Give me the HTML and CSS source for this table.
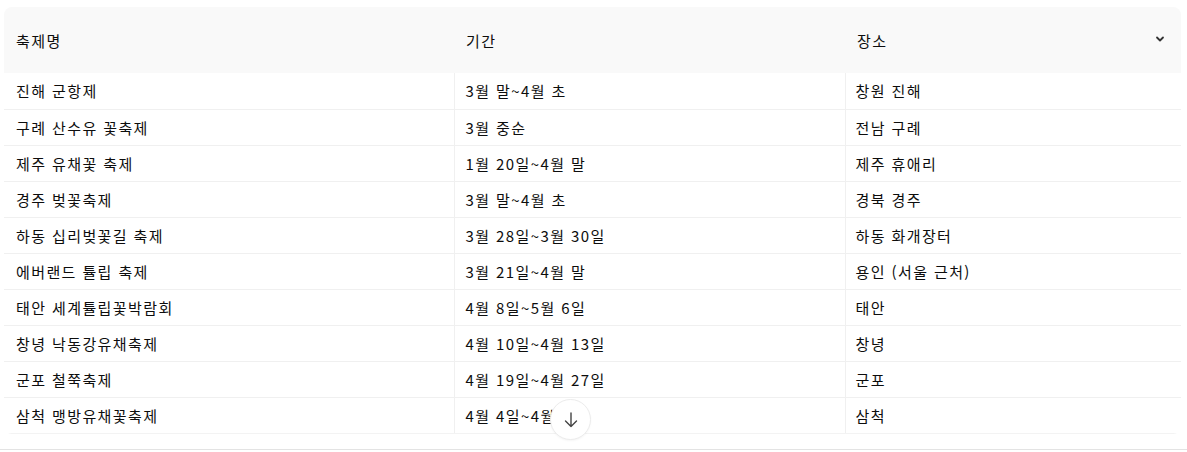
FILE: index.html
```html
<!DOCTYPE html>
<html lang="ko">
<head>
<meta charset="utf-8">
<link rel="stylesheet" href="styles.css">
</head>
<body>
<div class="page">
  <div class="scroller">
    <div class="table-wrap">
      <table class="tbl">
        <colgroup><col class="c1"><col class="c2"><col class="c3"></colgroup>
        <thead>
          <tr><th>축제명</th><th>기간</th><th class="last">장소
            <svg class="chev" width="10" height="10" viewBox="0 0 10 10"><path d="M2 3.5 L5 6.5 L8 3.5" fill="none" stroke="#333" stroke-width="1.8" stroke-linecap="round" stroke-linejoin="round"/></svg>
          </th></tr>
        </thead>
        <tbody>
          <tr><td>진해 군항제</td><td>3월 말~4월 초</td><td>창원 진해</td></tr>
          <tr><td>구례 산수유 꽃축제</td><td>3월 중순</td><td>전남 구례</td></tr>
          <tr><td>제주 유채꽃 축제</td><td>1월 20일~4월 말</td><td>제주 휴애리</td></tr>
          <tr><td>경주 벚꽃축제</td><td>3월 말~4월 초</td><td>경북 경주</td></tr>
          <tr><td>하동 십리벚꽃길 축제</td><td>3월 28일~3월 30일</td><td>하동 화개장터</td></tr>
          <tr><td>에버랜드 튤립 축제</td><td>3월 21일~4월 말</td><td>용인 (서울 근처)</td></tr>
          <tr><td>태안 세계튤립꽃박람회</td><td>4월 8일~5월 6일</td><td>태안</td></tr>
          <tr><td>창녕 낙동강유채축제</td><td>4월 10일~4월 13일</td><td>창녕</td></tr>
          <tr><td>군포 철쭉축제</td><td>4월 19일~4월 27일</td><td>군포</td></tr>
          <tr><td>삼척 맹방유채꽃축제</td><td>4월 4일~4월 6일</td><td>삼척</td></tr>
        </tbody>
      </table>
    </div>
  </div>
  <button class="down" aria-label="scroll down">
    <svg class="arrow" width="20" height="20" viewBox="0 0 20 20"><path d="M10 3 V16.5 M4.5 11 L10 16.5 L15.5 11" fill="none" stroke="#444" stroke-width="1.4" stroke-linecap="round" stroke-linejoin="round"/></svg>
  </button>
</div>
</body>
</html>
```

FILE: styles.css
```css
html, body {
  margin: 0;
  padding: 0;
  background: #ffffff;
}
body {
  font-family: "Malgun Gothic", "Noto Sans CJK KR", "Noto Sans", sans-serif;
  font-size: 15px;
  letter-spacing: 1.4px;
  color: #0d0d0d;
}
.page {
  position: relative;
  width: 1187px;
  height: 452px;
}
.scroller {
  padding: 7px 6px 0 4px;
  border-bottom: 1px solid #e3e3e3;
  box-sizing: border-box;
  height: 450px;
}
.table-wrap {
  border-radius: 8px;
  overflow: hidden;
  width: 1177px;
}
.tbl {
  border-collapse: collapse;
  width: 1177px;
  table-layout: fixed;
}
.c1 { width: 450px; }
.c2 { width: 391px; }
.c3 { width: 336px; }
.tbl th {
  background: #f9f9f9;
  height: 66px;
  padding: 0 12px;
  text-align: left;
  font-weight: 400;
  vertical-align: middle;
  box-sizing: border-box;
}
.tbl th.last {
  position: relative;
}
.chev {
  position: absolute;
  right: 16px;
  top: 27px;
}
.tbl td {
  height: 36px;
  padding: 0 12px 0 11px;
  box-sizing: border-box;
  border-bottom: 1px solid #f0f0f0;
  vertical-align: middle;
  white-space: nowrap;
}
.tbl td:first-child {
  padding-left: 12px;
}
.tbl td + td {
  border-left: 1px solid #f0f0f0;
}
.tbl td:last-child {
  padding-left: 10px;
  border-right: 1px solid #f0f0f0;
}
.tbl tbody tr:last-child td {
  border-bottom: 1px solid #f3f3f3;
}
.down {
  position: absolute;
  left: 550px;
  top: 399px;
  width: 41px;
  height: 41px;
  border-radius: 50%;
  background: #ffffff;
  border: 1px solid #ececec;
  box-shadow: 0 1px 2px rgba(0,0,0,0.04);
  padding: 0;
  display: flex;
  align-items: center;
  justify-content: center;
}
.arrow {
  width: 20px;
  height: 20px;
  flex: none;
}
```
